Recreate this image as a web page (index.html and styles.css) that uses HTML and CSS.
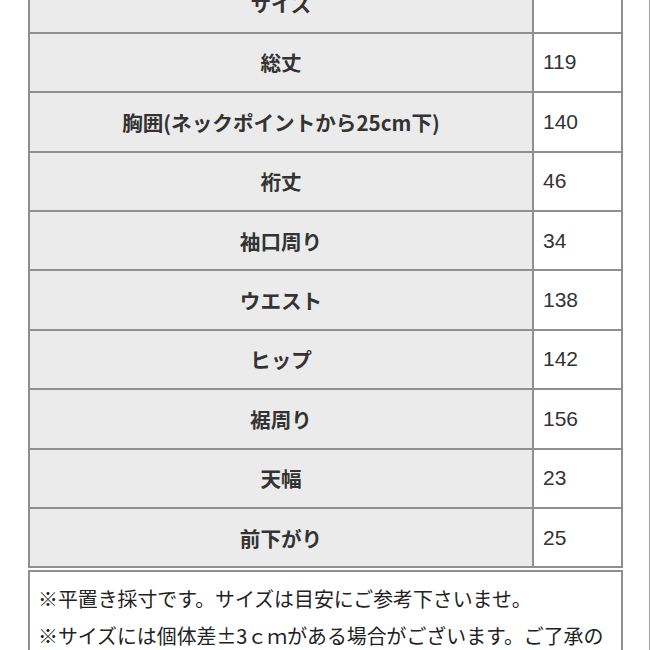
FILE: index.html
```html
<!DOCTYPE html>
<html lang="ja">
<head>
<meta charset="utf-8">
<title>サイズ表</title>
<link rel="stylesheet" href="styles.css">
</head>
<body>
<div class="viewport">
  <div class="content">
    <div class="size-table">
      <div class="row"><div class="label">サイズ</div><div class="value"></div></div>
      <div class="row"><div class="label">総丈</div><div class="value">119</div></div>
      <div class="row"><div class="label">胸囲(ネックポイントから25cm下)</div><div class="value">140</div></div>
      <div class="row"><div class="label">裄丈</div><div class="value">46</div></div>
      <div class="row"><div class="label">袖口周り</div><div class="value">34</div></div>
      <div class="row"><div class="label">ウエスト</div><div class="value">138</div></div>
      <div class="row"><div class="label">ヒップ</div><div class="value">142</div></div>
      <div class="row"><div class="label">裾周り</div><div class="value">156</div></div>
      <div class="row"><div class="label">天幅</div><div class="value">23</div></div>
      <div class="row"><div class="label">前下がり</div><div class="value">25</div></div>
    </div>
    <div class="note">
      <p>※平置き採寸です。サイズは目安にご参考下さいませ。</p>
      <p>※サイズには個体差±3ｃｍがある場合がございます。ご了承の</p>
    </div>
  </div>
</div>
</body>
</html>
```
FILE: styles.css
```css
html, body {
  margin: 0;
  padding: 0;
  background: #ffffff;
}
.viewport {
  width: 649px;
  height: 650px;
  overflow: hidden;
  border-right: 1px solid #a0a0a0;
}
.content {
  margin-top: -25.6px;
  margin-left: 28px;
  width: 595px;
}
.size-table {
  border-left: 2px solid #8f8f8f;
  border-right: 2px solid #8f8f8f;
}
.row {
  display: grid;
  grid-template-columns: 504px 1fr;
  height: 59.4px;
  box-sizing: border-box;
  border-bottom: 2px solid #8f8f8f;
}
.label {
  background: #ebebeb;
  border-right: 2px solid #8f8f8f;
  display: flex;
  align-items: center;
  justify-content: center;
  font-family: "Noto Sans CJK JP", sans-serif;
  font-weight: bold;
  font-size: 20.6px;
  color: #333333;
}
.value {
  display: flex;
  align-items: center;
  padding-left: 9px;
  font-family: "Liberation Sans", "Noto Sans CJK JP", sans-serif;
  font-size: 21px;
  color: #333333;
}
.note {
  margin-top: 2px;
  border: 2px solid #8f8f8f;
  padding: 8px 8px 8px 8px;
  font-family: "Noto Sans CJK JP", sans-serif;
  font-size: 19.9px;
  line-height: 37px;
  color: #222222;
}
.note p {
  margin: 0;
  white-space: nowrap;
}
```
